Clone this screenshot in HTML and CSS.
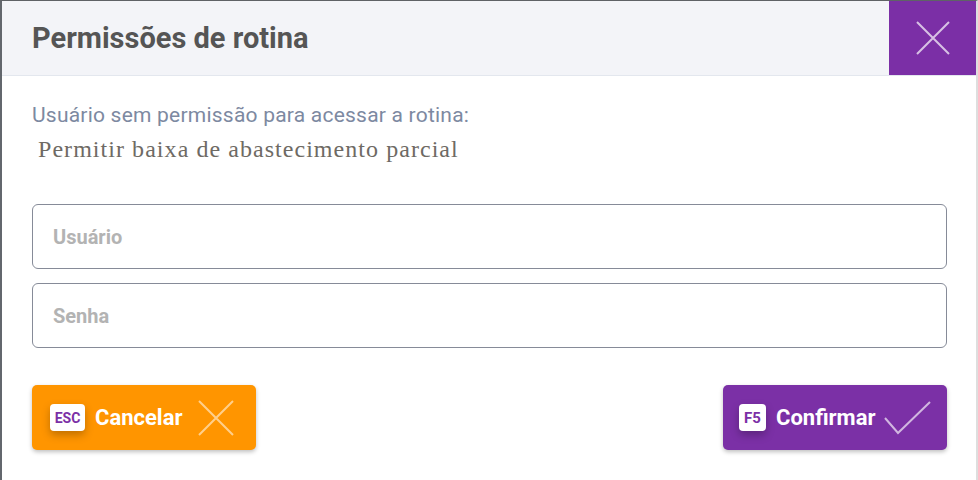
FILE: index.html
```html
<!DOCTYPE html>
<html lang="pt-BR">
<head>
  <meta charset="UTF-8" />
  <title>Permissões de rotina</title>
  <link rel="stylesheet" href="styles.css">
</head>
<body>
  <div class="modal">
    <div class="modal-header">
      <h1>Permissões de rotina</h1>
      <button class="close-btn" aria-label="Fechar">
        <svg width="34" height="34" viewBox="0 0 34 34">
          <path d="M1 1 L33 33 M33 1 L1 33" stroke="rgba(255,255,255,0.7)" stroke-width="2" fill="none" />
        </svg>
      </button>
    </div>

    <div class="modal-body">
      <p class="info">Usuário sem permissão para acessar a rotina:</p>
      <p class="routine">Permitir baixa de abastecimento parcial</p>

      <!-- Credenciais -->
      <input class="field" type="text" placeholder="Usuário" />
      <input class="field" type="password" placeholder="Senha" />

      <div class="actions">
        <button class="btn btn-cancel">
          <span class="key key-esc">ESC</span>
          <span class="btn-label">Cancelar</span>
          <svg width="36" height="36" viewBox="0 0 36 36">
            <path d="M1 1 L35 35 M35 1 L1 35" stroke="rgba(255,255,255,0.55)" stroke-width="2" fill="none" />
          </svg>
        </button>
        <button class="btn btn-confirm">
          <span class="key">F5</span>
          <span class="btn-label">Confirmar</span>
          <svg width="48" height="34" viewBox="0 0 48 34">
            <path d="M1 17 L14 32 L46 1" stroke="rgba(255,255,255,0.65)" stroke-width="2" fill="none" />
          </svg>
        </button>
      </div>
    </div>
  </div>
</body>
</html>
```

FILE: styles.css
```css
html, body {
  margin: 0;
  padding: 0;
  background: #fff;
}
body {
  font-family: Roboto, "Liberation Sans", sans-serif;
  width: 978px;
  height: 480px;
  overflow: hidden;
}
.modal {
  box-sizing: border-box;
  height: 480px;
  border-top: 1px solid #5f6266;
  border-left: 2px solid #63676d;
  border-right: 2px solid #dedede;
  background: #fff;
}
.modal-header {
  display: flex;
  align-items: stretch;
  height: 74px;
  background: #f3f4f8;
  border-bottom: 1px solid #e3e7ee;
}
.modal-header h1 {
  flex: 1;
  margin: 0;
  padding-left: 30px;
  align-self: center;
  font-size: 29px;
  font-weight: 700;
  color: #555;
}
.close-btn {
  width: 87px;
  border: none;
  background: #7b2fa6;
  display: flex;
  align-items: center;
  justify-content: center;
  padding: 0;
  cursor: pointer;
}
.modal-body {
  padding: 26px 29px 0 30px;
}
.info {
  margin: 0;
  font-size: 21px;
  letter-spacing: 0.22px;
  color: #7d89a1;
  line-height: 26px;
}
.routine {
  margin: 6px 0 0 6px;
  font-family: "Liberation Serif", serif;
  font-size: 24px;
  letter-spacing: 1.05px;
  color: #6e6a64;
  line-height: 30px;
}
.field {
  display: block;
  box-sizing: border-box;
  width: 100%;
  height: 65px;
  margin-top: 14px;
  padding: 0 20px;
  border: 1px solid #868b98;
  border-radius: 6px;
  font-family: Roboto, "Liberation Sans", sans-serif;
  font-size: 20px;
  font-weight: 700;
  outline: none;
}
.routine + .field {
  margin-top: 40px;
}
.field::placeholder {
  color: #b3b3b3;
}
.actions {
  display: flex;
  justify-content: space-between;
  margin-top: 37px;
}
.btn {
  display: flex;
  align-items: center;
  width: 224px;
  height: 65px;
  padding: 0 0 0 18px;
  border: none;
  border-radius: 5px;
  color: #fff;
  cursor: pointer;
  box-shadow: 0 2px 4px rgba(0, 0, 0, 0.25);
}
.btn-cancel {
  background: #ff9500;
}
.btn-confirm {
  background: #7b30a6;
  padding-left: 16px;
}
.key {
  display: inline-flex;
  align-items: center;
  justify-content: center;
  min-width: 27px;
  height: 27px;
  padding: 0 3px;
  box-sizing: border-box;
  background: #fff;
  border-radius: 4px;
  color: #7b30a6;
  font-family: Roboto, "Liberation Sans", sans-serif;
  font-size: 15px;
  font-weight: 700;
  box-shadow: 0 4px 8px rgba(0, 0, 0, 0.25);
}
.key-esc {
  width: 35px;
  font-size: 14px;
}
.btn-label {
  margin-left: 10px;
  margin-right: 15px;
  font-family: Roboto, "Liberation Sans", sans-serif;
  font-size: 22px;
  font-weight: 700;
}
.btn-confirm .btn-label {
  margin-right: 8px;
}
```
